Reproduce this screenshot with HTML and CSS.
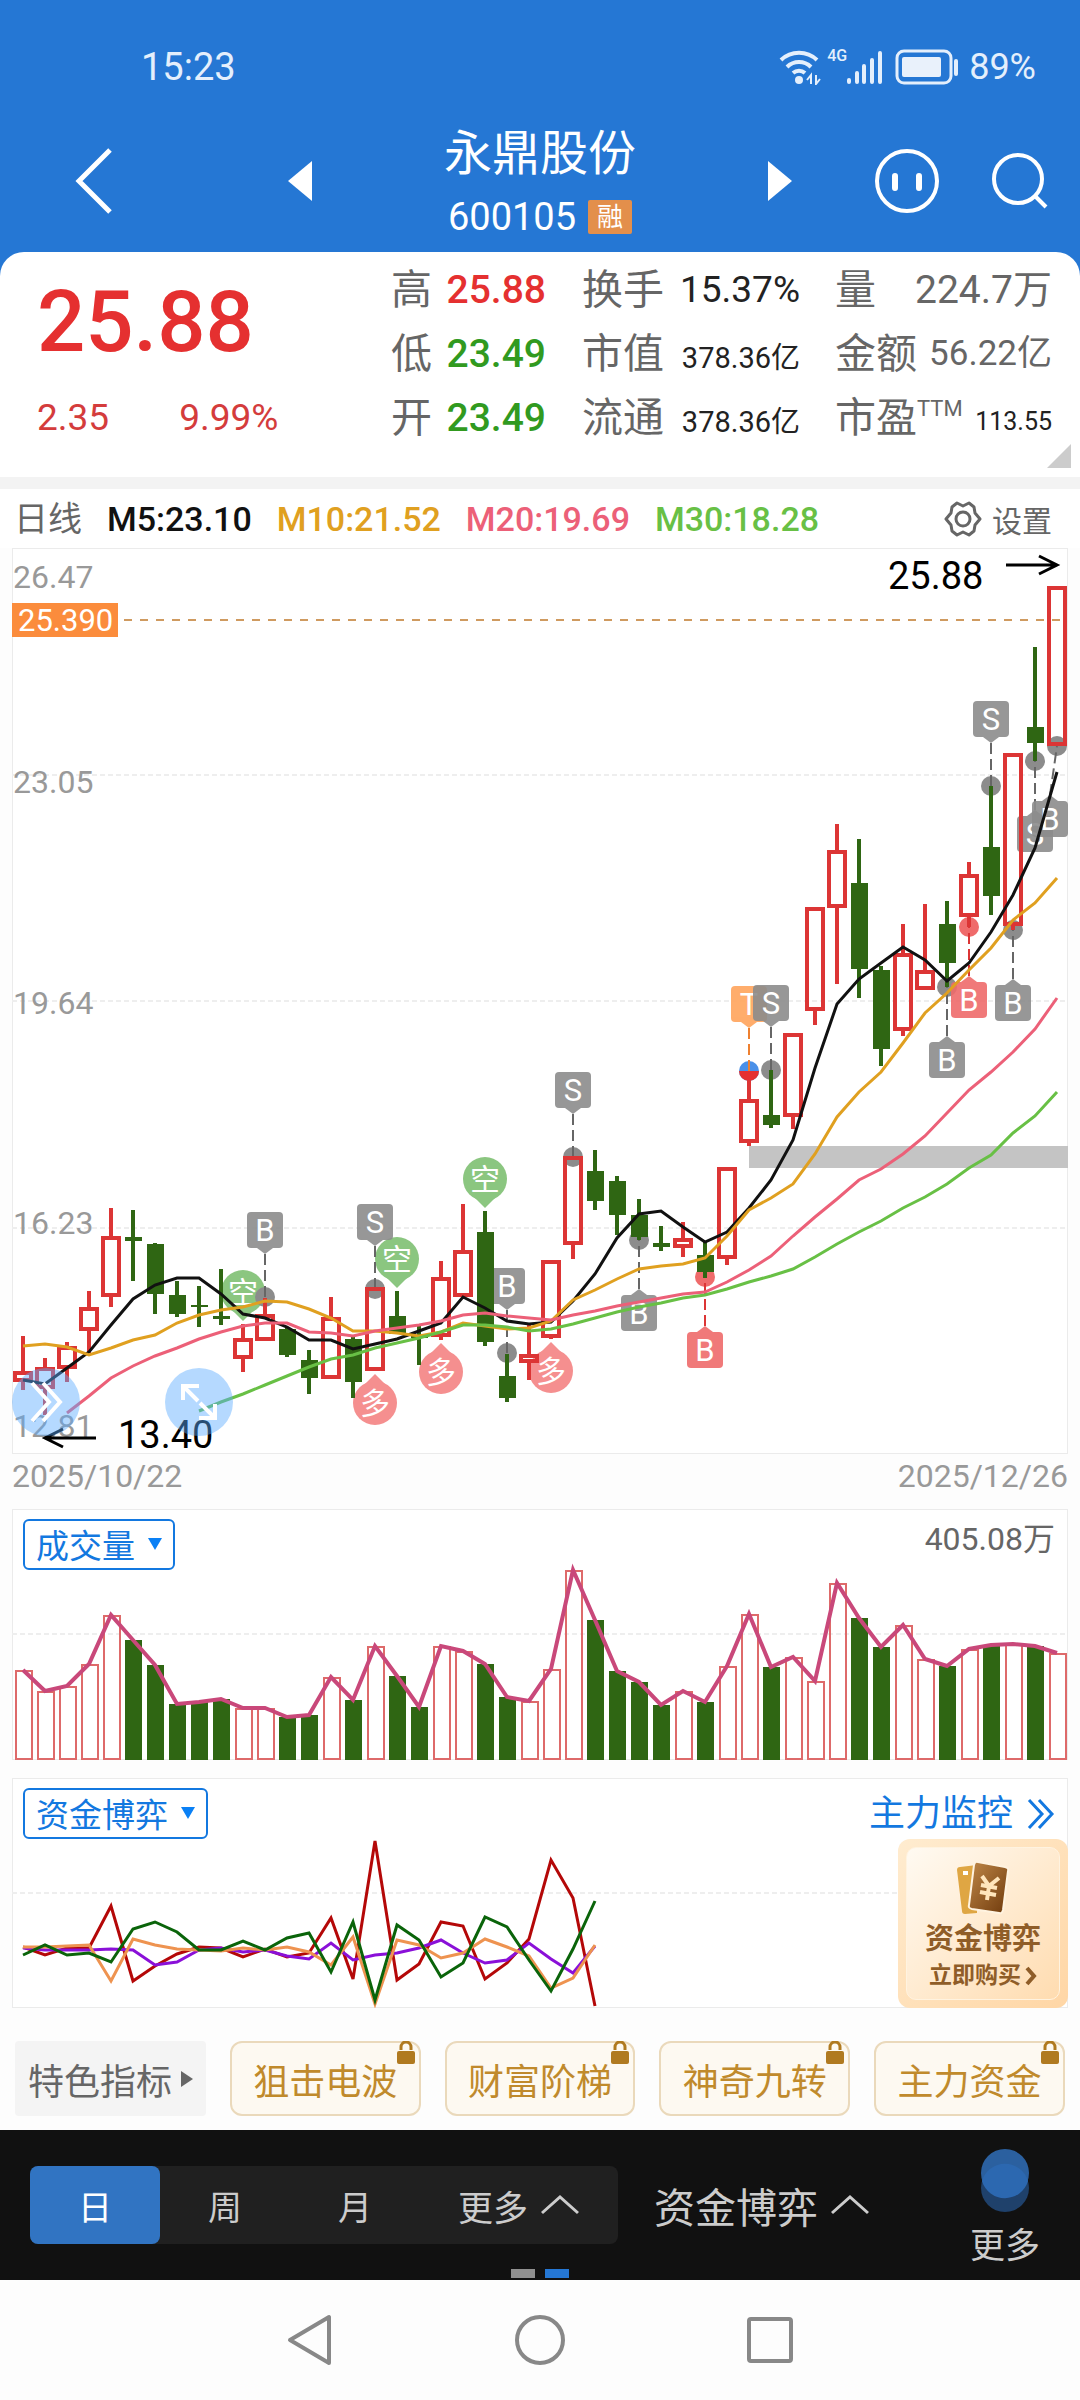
FILE: index.html
```html
<!DOCTYPE html>
<html lang="zh-CN">
<head>
    <meta charset="UTF-8">
    <meta name="viewport" content="width=device-width, initial-scale=1.0">
    <title>永鼎股份 600105</title>
    <link rel="stylesheet" href="styles.css">
</head>
<body>
    <header class="top">
        <div class="status-bar">
            <span class="time">15:23</span>
            <div class="status-icons">
                <svg width="42" height="36" viewBox="0 0 42 36" fill="none" stroke="#e4effc" stroke-width="4">
                    <path d="M2 11a26 26 0 0 1 36 0M8 18a17 17 0 0 1 24 0M14 24a9 9 0 0 1 12 0"/>
                    <circle cx="20" cy="31" r="4" fill="#e4effc" stroke="none"/>
                    <path d="M32 35V26l-4 5M37 26v9l4-5" stroke-width="2"/>
                </svg>
                <span class="net">4G</span>
                <svg width="36" height="36" viewBox="0 0 36 36" stroke="#e4effc" stroke-width="4" stroke-linecap="round">
                    <path d="M2 31v2M10 24v9M17 17v16M25 11v22M33 4v29"/>
                </svg>
                <svg class="battery" width="64" height="36" viewBox="0 0 64 36" fill="none">
                    <rect x="2" y="2" width="54" height="32" rx="7" stroke="#e4effc" stroke-width="3"/>
                    <rect x="7" y="8" width="39" height="20" rx="2" fill="#e9f1fb"/>
                    <rect x="59" y="10" width="4" height="17" rx="2" fill="#e4effc"/>
                </svg>
                <span>89%</span>
            </div>
        </div>
        <div class="title-bar">
            <button class="icon-btn back" aria-label="返回">
                <svg width="40" height="66" viewBox="0 0 40 66" fill="none" stroke="#fff" stroke-width="5"><path d="M36 2L5 33l31 31"/></svg>
            </button>
            <button class="icon-btn prev" aria-label="上一只">
                <svg width="24" height="40" viewBox="0 0 24 40" fill="#fff"><path d="M24 0v40L0 20z"/></svg>
            </button>
            <div class="stock">
                <h1>永鼎股份</h1>
                <div class="code">600105 <span class="badge">融</span></div>
            </div>
            <button class="icon-btn next" aria-label="下一只">
                <svg width="24" height="40" viewBox="0 0 24 40" fill="#fff"><path d="M0 0v40l24-20z"/></svg>
            </button>
            <div class="tools">
                <button class="icon-btn" aria-label="助手">
                    <svg width="66" height="66" viewBox="0 0 66 66" fill="none" stroke="#fff" stroke-width="4"><circle cx="33" cy="33" r="30"/><path d="M21 28v12M45 28v12" stroke-width="6" stroke-linecap="round"/></svg>
                </button>
                <button class="icon-btn" aria-label="搜索">
                    <svg width="58" height="58" viewBox="0 0 58 58" fill="none" stroke="#fff" stroke-width="4"><circle cx="28" cy="27" r="24"/><path d="M45 44l11 11"/></svg>
                </button>
            </div>
        </div>
    </header>

    <section class="quote">
        <div class="price">
            <strong>25.88</strong>
            <div class="change"><span>2.35</span><span>9.99%</span></div>
        </div>
        <dl class="stats col-a">
            <div><dt>高</dt><dd class="up">25.88</dd></div>
            <div><dt>低</dt><dd class="down">23.49</dd></div>
            <div><dt>开</dt><dd class="down">23.49</dd></div>
        </dl>
        <dl class="stats col-b">
            <div><dt>换手</dt><dd class="mid">15.37%</dd></div>
            <div><dt>市值</dt><dd class="small">378.36亿</dd></div>
            <div><dt>流通</dt><dd class="small">378.36亿</dd></div>
        </dl>
        <dl class="stats col-c">
            <div><dt>量</dt><dd class="grey">224.7万</dd></div>
            <div><dt>金额</dt><dd class="grey narrow">56.22亿</dd></div>
            <div><dt>市盈<sup>TTM</sup></dt><dd class="tiny">113.55</dd></div>
        </dl>
    </section>

    <div class="ma-row">
        <span class="period">日线</span>
        <span class="ma m5">M5:23.10</span>
        <span class="ma m10">M10:21.52</span>
        <span class="ma m20">M20:19.69</span>
        <span class="ma m30">M30:18.28</span>
        <button class="settings">
            <svg width="38" height="38" viewBox="0 0 38 38" fill="none" stroke="#666" stroke-width="3" stroke-linejoin="round"><path d="M13 3l6 3 6-3 5 4 1 6 5 6-5 6-1 6-5 4-6-3-6 3-5-4-1-6-5-6 5-6 1-6z"/><circle cx="19" cy="19" r="7"/></svg>
            设置
        </button>
    </div>

    <main>
        <div class="panel">
            <svg id="klineChart" viewBox="12 548 1056 906"></svg>
            <button class="float-btn forward" aria-label="展开">
                <svg width="34" height="42" viewBox="0 0 34 42" fill="none" stroke="#fff" stroke-width="4"><path d="M3 2l17 19L3 40M14 2l17 19-17 19"/></svg>
            </button>
            <button class="float-btn expand" aria-label="全屏">
                <svg width="38" height="38" viewBox="0 0 38 38" fill="none" stroke="#fff" stroke-width="4"><path d="M3 17V3h16M4 4l14 14M35 21v14H19M34 34L20 20"/></svg>
            </button>
        </div>
        <div class="dates"><span>2025/10/22</span><span>2025/12/26</span></div>

        <div class="panel volume">
            <svg id="volumeChart" viewBox="12 1509 1056 251"></svg>
            <div class="panel-head">
                <label class="picker"><select aria-label="指标一"><option>成交量</option></select></label>
                <span class="max">405.08万</span>
            </div>
        </div>

        <div class="panel funds">
            <svg id="fundsChart" viewBox="12 0 1056 230"></svg>
            <div class="panel-head">
                <label class="picker"><select aria-label="指标二"><option>资金博弈</option></select></label>
                <a href="#" class="monitor">主力监控
                    <svg width="28" height="32" viewBox="0 0 28 32" fill="none" stroke="#1378e0" stroke-width="3"><path d="M2 2l13 14L2 30M12 2l13 14-13 14"/></svg>
                </a>
            </div>
            <a href="#" class="promo">
                <span class="promo-inner">
                    <svg width="54" height="54" viewBox="0 0 54 54">
                        <defs>
                            <linearGradient id="card" x1="0" y1="0" x2="1" y2="1"><stop offset="0" stop-color="#c08848"/><stop offset="1" stop-color="#6f3a0c"/></linearGradient>
                        </defs>
                        <path d="M4 6l17-2v48L9 53q-3 0-3-3L1 9q0-3 3-3z" fill="#dfa643"/>
                        <rect x="7" y="10" width="5" height="4" fill="#fff"/>
                        <path d="M22 1l27 5q4 1 3 4l-5 39q-1 4-4 3l-27-4q-4-1-3-4L18 4q1-4 4-3z" fill="url(#card)" stroke="#fff3e0" stroke-width="2"/>
                        <path d="M26 15l7 10 10-8M33 25l-2 14M25 24l16 3M24 31l16 3" fill="none" stroke="#ffe5bb" stroke-width="4"/>
                    </svg>
                    <b>资金博弈</b>
                    <span class="buy">立即购买<svg width="12" height="20" viewBox="0 0 12 20" fill="none" stroke="#8f5d28" stroke-width="4"><path d="M2 2l7 8-7 8"/></svg></span>
                </span>
            </a>
        </div>

        <div class="chips">
            <button class="chip more">特色指标<i></i></button>
            <button class="chip locked">狙击电波<svg class="lock" width="18" height="23" viewBox="0 0 18 23"><path d="M4 9V6a5 5 0 0 1 10 0v3" fill="none" stroke="#b07a20" stroke-width="3"/><rect y="10" width="18" height="13" rx="2" fill="#b07a20"/></svg></button>
            <button class="chip locked">财富阶梯<svg class="lock" width="18" height="23" viewBox="0 0 18 23"><path d="M4 9V6a5 5 0 0 1 10 0v3" fill="none" stroke="#b07a20" stroke-width="3"/><rect y="10" width="18" height="13" rx="2" fill="#b07a20"/></svg></button>
            <button class="chip locked">神奇九转<svg class="lock" width="18" height="23" viewBox="0 0 18 23"><path d="M4 9V6a5 5 0 0 1 10 0v3" fill="none" stroke="#b07a20" stroke-width="3"/><rect y="10" width="18" height="13" rx="2" fill="#b07a20"/></svg></button>
            <button class="chip locked">主力资金<svg class="lock" width="18" height="23" viewBox="0 0 18 23"><path d="M4 9V6a5 5 0 0 1 10 0v3" fill="none" stroke="#b07a20" stroke-width="3"/><rect y="10" width="18" height="13" rx="2" fill="#b07a20"/></svg></button>
        </div>
    </main>

    <footer class="toolbar">
        <div class="segment">
            <button class="active">日</button>
            <button>周</button>
            <button>月</button>
            <button class="wide">更多<svg width="40" height="22" viewBox="0 0 40 22" fill="none" stroke="#ccc" stroke-width="3"><path d="M2 19L20 3l18 16"/></svg></button>
        </div>
        <button class="fund-btn">资金博弈<svg width="40" height="22" viewBox="0 0 40 22" fill="none" stroke="#ccc" stroke-width="3"><path d="M2 19L20 3l18 16"/></svg></button>
        <button class="more-btn">
            <svg width="50" height="64" viewBox="0 0 50 64"><circle cx="25" cy="39" r="24" fill="#1f416b"/><circle cx="25" cy="24" r="24" fill="#2b609f"/><path d="M2 32a24 24 0 0 1 46 0 24 24 0 0 1-46 0z" fill="#2c68b0"/></svg>
            更多
        </button>
        <div class="pages"><i></i><i class="on"></i></div>
    </footer>

    <nav class="system-nav">
        <button class="icon-btn" aria-label="返回"><svg width="50" height="54" viewBox="0 0 50 54" fill="none" stroke="#888" stroke-width="4" stroke-linejoin="round"><path d="M44 4v46L5 27z"/></svg></button>
        <button class="icon-btn" aria-label="主页"><svg width="50" height="54" viewBox="0 0 50 54" fill="none" stroke="#888" stroke-width="4"><circle cx="25" cy="27" r="23"/></svg></button>
        <button class="icon-btn" aria-label="最近"><svg width="50" height="54" viewBox="0 0 50 54" fill="none" stroke="#888" stroke-width="4"><rect x="4" y="6" width="42" height="42" rx="2"/></svg></button>
    </nav>

    <script src="charts.js"></script>
</body>
</html>
```
FILE: styles.css
```css
* {
    box-sizing: border-box;
}

body {
    margin: 0;
    background: #fdfdfd;
    font-family: Roboto, "Noto Sans CJK SC", sans-serif;
    color: #666;
}

button {
    padding: 0;
    border: none;
    background: none;
    font-family: inherit;
    color: inherit;
    cursor: pointer;
}

a {
    text-decoration: none;
}

svg {
    display: block;
    flex: none;
}

/* header */
.top {
    position: relative;
    z-index: 1;
    background: #2577d4;
    color: #fff;
}

.status-bar {
    display: flex;
    justify-content: space-between;
    align-items: center;
    height: 110px;
    padding: 24px 44px 0 141px;
    color: #e4effc;
}

.time {
    font-size: 38px;
}

.status-icons {
    display: flex;
    align-items: center;
    font-size: 36px;
}

.net {
    align-self: flex-start;
    margin-left: 6px;
    font-size: 16px;
    font-weight: 500;
    line-height: 20px;
}

.battery {
    margin: 0 10px 0 12px;
}

.title-bar {
    display: grid;
    grid-template-columns: 288px 1fr 192px 1fr 288px;
    align-items: center;
    height: 142px;
}

.icon-btn {
    display: flex;
}

.back {
    margin-left: 74px;
}

.next {
    justify-self: end;
}

.stock {
    padding-top: 6px;
    text-align: center;
}

.stock h1 {
    margin: 0;
    font-size: 48px;
    font-weight: 400;
    line-height: 66px;
    white-space: nowrap;
}

.code {
    display: flex;
    justify-content: center;
    align-items: center;
    gap: 12px;
    font-size: 38px;
    line-height: 60px;
}

.badge {
    padding: 0 9px;
    border-radius: 2px;
    background: #e38f4b;
    font-size: 26px;
    line-height: 34px;
}

.tools {
    display: flex;
    align-items: center;
    justify-content: flex-end;
    gap: 50px;
    padding-right: 32px;
}

/* quote */
.quote {
    display: flex;
    position: relative;
    height: 237px;
    padding: 6px 28px 0 37px;
    border-bottom: 12px solid #f3f3f3;
    background: #fff;
    border-radius: 24px 24px 0 0;
    box-shadow: 0 -24px 0 #2577d4;
}

.quote::after {
    content: "";
    position: absolute;
    right: 9px;
    bottom: 9px;
    border: 12px solid #ccc;
    border-top-color: transparent;
    border-left-color: transparent;
}

.price {
    flex: 1;
    color: #e53030;
}

.price strong {
    display: block;
    font-size: 85px;
    font-weight: 500;
    line-height: 128px;
}

.change {
    display: flex;
    gap: 70px;
    font-size: 37px;
    line-height: 64px;
    color: #d43c3c;
}

.stats {
    margin: 0;
}

.stats > div {
    display: flex;
    justify-content: space-between;
    height: 64px;
    line-height: 64px;
}

.stats dt {
    font-size: 41px;
    white-space: nowrap;
}

.stats dd {
    margin: 0;
    font-size: 39px;
    color: #222;
    white-space: nowrap;
}

.stats sup {
    font-size: 22px;
    line-height: 20px;
    vertical-align: 16px;
}

.col-a {
    width: 155px;
    margin-right: 36px;
}

.col-b {
    width: 218px;
    margin-right: 35px;
}

.col-c {
    width: 217px;
}

.stats .up {
    color: #e53030;
    font-weight: 500;
}

.stats .down {
    color: #319a1f;
    font-weight: 500;
}

.stats .mid {
    font-size: 37px;
}

.stats .small {
    padding-top: 4px;
    font-size: 29px;
}

.stats .tiny {
    padding-top: 4px;
    font-size: 25px;
}

.stats .grey {
    color: #666;
}

.stats .narrow {
    font-size: 35px;
}

/* moving averages */
.ma-row {
    display: flex;
    align-items: center;
    height: 59px;
    padding: 0 28px 0 14px;
    background: #fff;
    font-size: 34px;
    line-height: 40px;
    white-space: nowrap;
}

.ma {
    margin-left: 25px;
    font-weight: 500;
}

.m5 { color: #111; }
.m10 { color: #e0a020; }
.m20 { color: #ec6078; }
.m30 { color: #68c045; }

.settings {
    display: flex;
    align-items: center;
    gap: 10px;
    margin-left: auto;
    font-size: 30px;
}

/* charts */
main {
    padding: 0 12px;
}

.panel {
    position: relative;
    background: #fff;
}

.panel > svg {
    width: 100%;
    height: auto;
}

.funds {
    margin-top: 18px;
}

.float-btn {
    display: flex;
    position: absolute;
    bottom: 18px;
    align-items: center;
    justify-content: center;
    width: 68px;
    height: 68px;
    border-radius: 50%;
    background: rgba(90, 170, 255, 0.45);
}

.forward { left: 0; }
.expand { left: 153px; }

.dates {
    display: flex;
    justify-content: space-between;
    height: 55px;
    font-size: 32px;
    line-height: 44px;
    color: #999;
}

.panel-head {
    position: absolute;
    top: 10px;
    left: 11px;
    right: 13px;
    display: flex;
    justify-content: space-between;
}

.picker {
    position: relative;
}

.picker select {
    appearance: none;
    height: 51px;
    padding: 4px 38px 0 11px;
    border: 2px solid #1378e0;
    border-radius: 6px;
    background: #fff;
    font-family: inherit;
    font-size: 33px;
    line-height: 44px;
    color: #1378e0;
}

.picker::after {
    content: "";
    position: absolute;
    top: 19px;
    right: 13px;
    border: 7px solid transparent;
    border-top: 12px solid #0a80f5;
    border-bottom: none;
}

.max {
    font-size: 32px;
    line-height: 40px;
}

.monitor {
    display: flex;
    align-items: center;
    gap: 14px;
    font-size: 36px;
    line-height: 50px;
    color: #1378e0;
}

.promo {
    position: absolute;
    right: 0;
    bottom: 0;
    width: 170px;
    height: 169px;
    padding: 8px;
    border-radius: 12px;
    background: linear-gradient(135deg, #ffecd0, #ffd6a5);
    color: #8f5d28;
}

.promo-inner {
    display: flex;
    flex-direction: column;
    align-items: center;
    height: 100%;
    padding-top: 13px;
    border: 1px solid #fff3e0;
    border-radius: 10px;
    background: linear-gradient(135deg, #fffaf2, #ffdcb0);
}

.promo b {
    font-size: 29px;
    line-height: 48px;
}

.buy {
    display: flex;
    align-items: center;
    gap: 4px;
    font-size: 23px;
    font-weight: 700;
    line-height: 26px;
}

/* feature chips */
.chips {
    display: grid;
    grid-template-columns: repeat(5, 1fr);
    gap: 24px;
    padding: 33px 3px 14px;
}

.chip {
    display: flex;
    position: relative;
    align-items: center;
    justify-content: center;
    height: 75px;
    border-radius: 12px;
    font-size: 36px;
    white-space: nowrap;
}

.chip.more {
    gap: 9px;
    border-radius: 4px;
    background: #f4f4f4;
}

.chip.more i {
    border: 8px solid transparent;
    border-left: 12px solid #666;
    border-right: none;
}

.chip.locked {
    border: 2px solid #ead9bb;
    background: #fdf9f1;
    color: #c08a2c;
}

.lock {
    position: absolute;
    top: -2px;
    right: 4px;
}

/* bottom toolbar */
.toolbar {
    display: flex;
    position: relative;
    align-items: center;
    justify-content: space-between;
    height: 150px;
    padding: 0 40px 0 30px;
    background: #111;
    color: #ccc;
}

.segment {
    display: flex;
    border-radius: 8px;
    background: #202020;
}

.segment button {
    width: 130px;
    height: 78px;
    border-radius: 8px;
    font-size: 34px;
}

.segment .active {
    background: #3174c2;
    color: #fff;
}

.segment .wide {
    display: flex;
    align-items: center;
    justify-content: center;
    gap: 12px;
    width: 198px;
    font-size: 35px;
}

.fund-btn {
    display: flex;
    align-items: center;
    gap: 12px;
    margin-right: 64px;
    font-size: 41px;
}

.more-btn {
    display: flex;
    flex-direction: column;
    align-items: center;
    gap: 10px;
    padding-top: 10px;
    font-size: 35px;
    line-height: 48px;
}

.pages {
    display: flex;
    position: absolute;
    bottom: 2px;
    left: 0;
    right: 0;
    justify-content: center;
    gap: 10px;
}

.pages i {
    width: 24px;
    height: 9px;
    background: #909090;
}

.pages .on {
    background: #2577d4;
}

.system-nav {
    display: flex;
    justify-content: center;
    align-items: center;
    gap: 180px;
    height: 120px;
}
```
FILE: charts.js
```js
const STEP = 22;
const FIRST_X = 23;
const RED = '#dc3535';
const GREEN = '#2f6613';
const FONT = 'font-family="Roboto, Noto Sans CJK SC, sans-serif"';

const xAt = i => FIRST_X + i * STEP;

// high, body top, body bottom, low, direction
const candles = [
    [1336, 1371, 1382, 1390, 1], [1358, 1367, 1389, 1415, 1], [1342, 1346, 1369, 1382, 1], [1291, 1307, 1331, 1353, 1],
    [1208, 1236, 1297, 1307, 1], [1210, 1237, 1241, 1281, 0], [1243, 1244, 1294, 1314, 0], [1281, 1295, 1314, 1317, 0],
    [1286, 1305, 1307, 1327, 0], [1269, 1316, 1319, 1325, 0], [1324, 1338, 1359, 1372, 1], [1298, 1314, 1341, 1341, 1],
    [1327, 1329, 1355, 1357, 0], [1350, 1360, 1378, 1394, 0], [1297, 1317, 1379, 1379, 1], [1337, 1339, 1382, 1398, 0],
    [1287, 1287, 1371, 1371, 1], [1291, 1316, 1334, 1334, 0], [1326, 1335, 1338, 1365, 0], [1261, 1277, 1337, 1340, 1],
    [1204, 1250, 1297, 1297, 1], [1211, 1232, 1342, 1346, 0], [1354, 1376, 1398, 1402, 0], [1325, 1354, 1363, 1380, 1],
    [1260, 1260, 1338, 1339, 1], [1156, 1156, 1245, 1259, 1], [1150, 1171, 1201, 1210, 0], [1176, 1181, 1215, 1235, 0],
    [1199, 1215, 1237, 1240, 0], [1226, 1243, 1247, 1251, 0], [1222, 1238, 1248, 1257, 1], [1242, 1255, 1272, 1278, 0],
    [1167, 1167, 1259, 1265, 1], [1080, 1099, 1143, 1146, 1], [1070, 1115, 1125, 1128, 0], [1033, 1033, 1117, 1129, 1],
    [907, 907, 1011, 1025, 1], [824, 850, 908, 984, 1], [839, 883, 969, 998, 0], [966, 970, 1049, 1066, 0],
    [924, 953, 1031, 1036, 1], [904, 970, 990, 990, 1], [901, 924, 963, 987, 0], [862, 874, 917, 927, 1],
    [786, 847, 896, 915, 0], [753, 753, 926, 930, 1], [647, 727, 743, 761, 0], [586, 586, 746, 746, 1]
];

const averages = [
    { color: '#111', from: 0, ys: [1380, 1384, 1368, 1352, 1325, 1299, 1285, 1278, 1278, 1294, 1314, 1318, 1327, 1340, 1340, 1349, 1344, 1339, 1331, 1323, 1297, 1308, 1321, 1324, 1322, 1301, 1274, 1238, 1214, 1211, 1227, 1242, 1232, 1208, 1180, 1140, 1068, 1004, 979, 963, 947, 960, 981, 963, 932, 895, 848, 772] },
    { color: '#e0a020', from: 0, ys: [1346, 1344, 1347, 1355, 1348, 1340, 1335, 1323, 1315, 1310, 1307, 1301, 1302, 1309, 1318, 1331, 1331, 1333, 1336, 1332, 1323, 1326, 1329, 1328, 1321, 1300, 1290, 1279, 1269, 1266, 1264, 1258, 1236, 1210, 1198, 1184, 1154, 1117, 1092, 1072, 1043, 1013, 993, 970, 948, 920, 903, 878] },
    { color: '#ec6078', from: 2, ys: [1413, 1396, 1378, 1366, 1356, 1348, 1339, 1332, 1326, 1323, 1323, 1332, 1333, 1336, 1331, 1328, 1325, 1321, 1315, 1313, 1316, 1318, 1320, 1315, 1311, 1306, 1302, 1298, 1294, 1292, 1282, 1270, 1256, 1236, 1217, 1199, 1180, 1169, 1154, 1136, 1113, 1090, 1072, 1052, 1029, 998] },
    { color: '#68c045', from: 8, ys: [1411, 1402, 1394, 1385, 1376, 1367, 1359, 1355, 1348, 1343, 1338, 1332, 1325, 1325, 1327, 1331, 1329, 1324, 1318, 1312, 1307, 1303, 1298, 1295, 1289, 1282, 1276, 1269, 1257, 1244, 1232, 1221, 1208, 1197, 1184, 1168, 1155, 1133, 1116, 1092] }
];

// candle index, letter, tag top, dot centre, kind
const tags = [
    [11, 'B', 1212, 1297], [16, 'S', 1204, 1289], [25, 'S', 1072, 1157], [22, 'B', 1268, 1353], [28, 'B', 1295, 1240],
    [31, 'B', 1332, 1277, 'red'], [33, 'T', 986, 1071, 'orange'], [34, 'S', 985, 1070], [42, 'B', 1042, 987],
    [43, 'B', 982, 927, 'red'], [45, 'B', 985, 930], [44, 'S', 701, 786], [46, 'S', 816, 761], [47, 'B', 801, 746]
];

// candle index, text, centre
const bubbles = [
    [10, '空', 1292], [17, '空', 1259], [21, '空', 1179], [16, '多', 1403], [19, '多', 1372], [24, '多', 1371]
];

const volumes = [1670, 1691, 1686, 1664, 1615, 1640, 1665, 1704, 1702, 1699, 1708, 1708, 1717, 1715, 1677, 1700, 1646, 1676, 1707, 1646, 1651, 1664, 1697, 1701, 1669, 1570, 1620, 1671, 1682, 1705, 1691, 1702, 1666, 1614, 1667, 1657, 1681, 1583, 1618, 1647, 1625, 1659, 1666, 1649, 1645, 1644, 1646, 1653];

const funds = [
    ['#b40808', [169, 177, 170, 170, 128, 203, 188, 176, 169, 170, 179, 171, 179, 175, 140, 201, 63, 202, 186, 144, 148, 201, 185, 161, 82, 120, 228]],
    ['#8a10d8', [170, 172, 172, 172, 171, 172, 187, 184, 172, 170, 174, 172, 178, 181, 165, 182, 177, 175, 170, 162, 175, 185, 182, 165, 181, 195, 168]],
    ['#ee9350', [169, 169, 168, 167, 203, 161, 167, 171, 172, 173, 170, 172, 169, 174, 187, 159, 226, 162, 167, 180, 175, 161, 169, 178, 210, 200, 167]],
    ['#0a640a', [177, 167, 177, 175, 184, 151, 144, 154, 172, 172, 163, 172, 160, 155, 194, 144, 222, 147, 162, 199, 185, 139, 149, 182, 213, 171, 123]]
];

function polyline(ys, color, width, from = 0) {
    const points = ys.map((y, i) => `${xAt(i + from)},${y}`).join(' ');
    return `<polyline points="${points}" fill="none" stroke="${color}" stroke-width="${width}"/>`;
}

// outer rect bleeds past the viewBox, leaving a 1px line inside
function frame(y, height) {
    return `<rect x="12" y="${y}" width="1056" height="${height}" fill="none" stroke="#ebebeb" stroke-width="2"/>`;
}

function gridLine(y) {
    return `<path d="M12 ${y}H1068" stroke="#eee" stroke-width="2" stroke-dasharray="5 3"/>`;
}

function candle([high, top, bottom, low, up], i) {
    const x = xAt(i);
    const color = up ? RED : GREEN;
    const wick = `<path d="M${x} ${high}V${top}M${x} ${bottom}V${low}" stroke="${color}" stroke-width="4"/>`;
    if (up) {
        return wick + `<rect x="${x - 8}" y="${top + 2}" width="16" height="${bottom - top - 4}" fill="none" stroke="${color}" stroke-width="4"/>`;
    }
    return wick + `<rect x="${x - 8}" y="${top}" width="17" height="${bottom - top}" fill="${color}"/>`;
}

function tag([i, letter, top, dot, kind]) {
    const colors = { red: ['#ef6b6b', '#dc3535'], orange: ['#ffa45c', '#ee8030'] };
    const [fill, line] = colors[kind] || ['#8c8c8c', '#666'];
    const x = xAt(i);
    const tx = Math.min(x, 1050);
    const above = top < dot;
    const edge = above ? top + 36 : top;
    const tip = above ? edge + 6 : edge - 6;
    let mark = `<circle cx="${x}" cy="${dot}" r="10" fill="${fill}"/>`;
    if (kind === 'orange') {
        mark = `<circle cx="${x}" cy="${dot}" r="10" fill="#4a90e8"/><path d="M${x - 10} ${dot}a10 10 0 0 0 20 0z" fill="#e53030"/>`;
    }
    return mark +
        `<path d="M${tx} ${tip}L${x} ${dot}" stroke="${line}" stroke-width="2" stroke-dasharray="11 5"/>` +
        `<g opacity="0.9"><rect x="${tx - 18}" y="${top}" width="36" height="36" rx="4" fill="${fill}"/>` +
        `<path d="M${tx - 8} ${edge}h16L${tx} ${tip}z" fill="${fill}"/></g>` +
        `<text x="${tx}" y="${top + 29}" ${FONT} font-size="31" fill="#fff" text-anchor="middle">${letter}</text>`;
}

function bubble([i, text, cy]) {
    const x = xAt(i);
    const down = text === '空';
    const fill = down ? '#8bc680' : '#f58f8f';
    const dir = down ? 1 : -1;
    return `<circle cx="${x}" cy="${cy}" r="22" fill="${fill}"/>` +
        `<path d="M${x - 12} ${cy + 17 * dir}L${x} ${cy + 29 * dir}L${x + 12} ${cy + 17 * dir}z" fill="${fill}"/>` +
        `<text x="${x}" y="${cy + 11}" ${FONT} font-size="30" fill="#fff" text-anchor="middle">${text}</text>`;
}

function label(x, y, text, size, color) {
    return `<text x="${x}" y="${y}" ${FONT} font-size="${size}" fill="${color}">${text}</text>`;
}

document.getElementById('klineChart').innerHTML =
    frame(548, 906) + [775, 1001, 1228].map(gridLine).join('') +
    label(13, 588, '26.47', 32, '#999') + label(13, 793, '23.05', 32, '#999') + label(13, 1014, '19.64', 32, '#999') +
    label(13, 1234, '16.23', 32, '#999') + label(13, 1437, '12.81', 32, '#999') +
    '<rect x="749" y="1146" width="319" height="22" fill="#c4c4c4"/>' +
    '<path d="M124 620H1060" stroke="#cf9a60" stroke-width="2" stroke-dasharray="8 8"/>' +
    '<rect x="12" y="603" width="106" height="34" fill="#fb8c3c"/>' + label(18, 631, '25.390', 31, '#fff') +
    bubbles.map(bubble).join('') + tags.map(tag).join('') + candles.map(candle).join('') +
    averages.map(a => polyline(a.ys, a.color, 3, a.from)).join('') +
    label(888, 589, '25.88', 38, '#000') + label(118, 1448, '13.40', 38, '#000') +
    '<path d="M1006 565H1056M1039 556L1057 565L1039 574M96 1438H46M63 1429L45 1438L63 1447" fill="none" stroke="#000" stroke-width="3"/>';

document.getElementById('volumeChart').innerHTML =
    frame(1509, 251) + gridLine(1634) +
    volumes.map((top, i) => {
        const x = xAt(i) - 7;
        return candles[i][4]
            ? `<rect x="${x}" y="${top + 1}" width="16" height="${1758 - top}" fill="none" stroke="#de6a6a" stroke-width="2"/>`
            : `<rect x="${x - 1}" y="${top}" width="17" height="${1760 - top}" fill="${GREEN}"/>`;
    }).join('') +
    polyline(volumes, '#c9487a', 4);

document.getElementById('fundsChart').innerHTML =
    frame(0, 230) + gridLine(115) + funds.map(([color, ys]) => polyline(ys, color, 3)).join('');
```
